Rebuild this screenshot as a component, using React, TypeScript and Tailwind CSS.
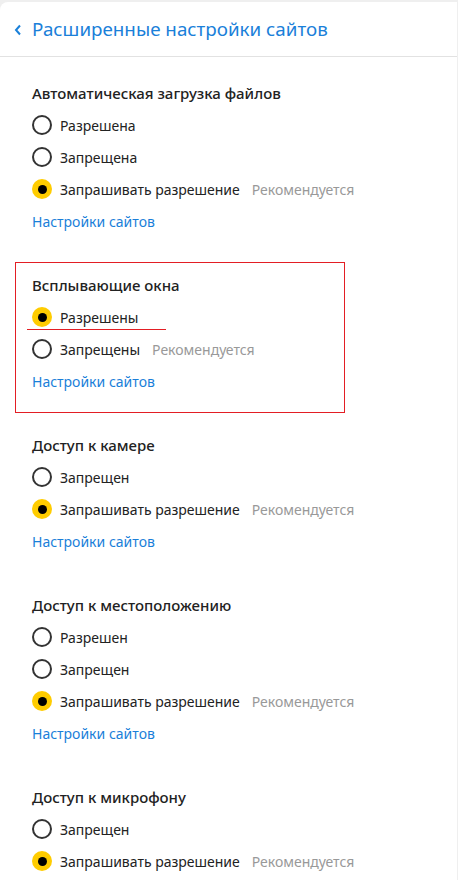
import React from "react";

type Opt = { label: string; selected?: boolean; rec?: boolean };

function Radio({ selected }: { selected?: boolean }) {
  if (selected) {
    return (
      <span className="flex h-[20px] w-[20px] shrink-0 items-center justify-center rounded-full bg-[#ffcc00]">
        <span className="h-[9px] w-[9px] rounded-full bg-black" />
      </span>
    );
  }
  return <span className="h-[20px] w-[20px] shrink-0 rounded-full border-2 border-[#333]" />;
}

function Row({ o }: { o: Opt }) {
  return (
    <div className="flex h-[32px] items-center">
      <Radio selected={o.selected} />
      <span className="ml-[8px] text-[14px] text-[#222]">{o.label}</span>
      {o.rec && <span className="ml-[12px] text-[14px] text-[#999]">Рекомендуется</span>}
    </div>
  );
}

function Section({
  title,
  opts,
  boxed,
  noLink,
}: {
  title: string;
  opts: Opt[];
  boxed?: boolean;
  noLink?: boolean;
}) {
  return (
    <div className="relative mb-[32px]">
      {boxed && (
        <>
          <div className="pointer-events-none absolute left-[-17px] top-[-7px] h-[151px] w-[330px] border border-[#e31e24]" />
          <div className="pointer-events-none absolute left-[-5px] top-[60px] h-px w-[139px] bg-[#e31e24]" />
        </>
      )}
      <div className="flex h-[32px] items-center text-[15px] font-medium text-[#222]">{title}</div>
      {opts.map((o, i) => (
        <Row key={i} o={o} />
      ))}
      {!noLink && (
        <div className="flex h-[32px] items-center text-[14px] text-[#1a80d9]">Настройки сайтов</div>
      )}
    </div>
  );
}

export default function App() {
  return (
    <div className="h-[880px] overflow-hidden bg-[#efefef] pt-[2px] font-['Noto_Sans','Open_Sans',sans-serif]">
      <div className="min-h-[878px] w-[457px] rounded-tl-[8px] bg-white">
        <div className="flex h-[55px] items-center border-b border-[#e2e2e2] pl-[14px]">
          <svg width="8" height="12" viewBox="0 0 8 12" className="mt-[1px]">
            <path d="M6 1.5 L2 6 L6 10.5" fill="none" stroke="#1a80d9" strokeWidth="2" />
          </svg>
          <span className="ml-[10px] text-[18.8px] text-[#1a80d9]">Расширенные настройки сайтов</span>
        </div>
        <div className="pl-[32px] pt-[20px]">
          <Section
            title="Автоматическая загрузка файлов"
            opts={[
              { label: "Разрешена" },
              { label: "Запрещена" },
              { label: "Запрашивать разрешение", selected: true, rec: true },
            ]}
          />
          <Section
            boxed
            title="Всплывающие окна"
            opts={[
              { label: "Разрешены", selected: true },
              { label: "Запрещены", rec: true },
            ]}
          />
          <Section
            title="Доступ к камере"
            opts={[
              { label: "Запрещен" },
              { label: "Запрашивать разрешение", selected: true, rec: true },
            ]}
          />
          <Section
            title="Доступ к местоположению"
            opts={[
              { label: "Разрешен" },
              { label: "Запрещен" },
              { label: "Запрашивать разрешение", selected: true, rec: true },
            ]}
          />
          <Section
            noLink
            title="Доступ к микрофону"
            opts={[
              { label: "Запрещен" },
              { label: "Запрашивать разрешение", selected: true, rec: true },
            ]}
          />
        </div>
      </div>
    </div>
  );
}
